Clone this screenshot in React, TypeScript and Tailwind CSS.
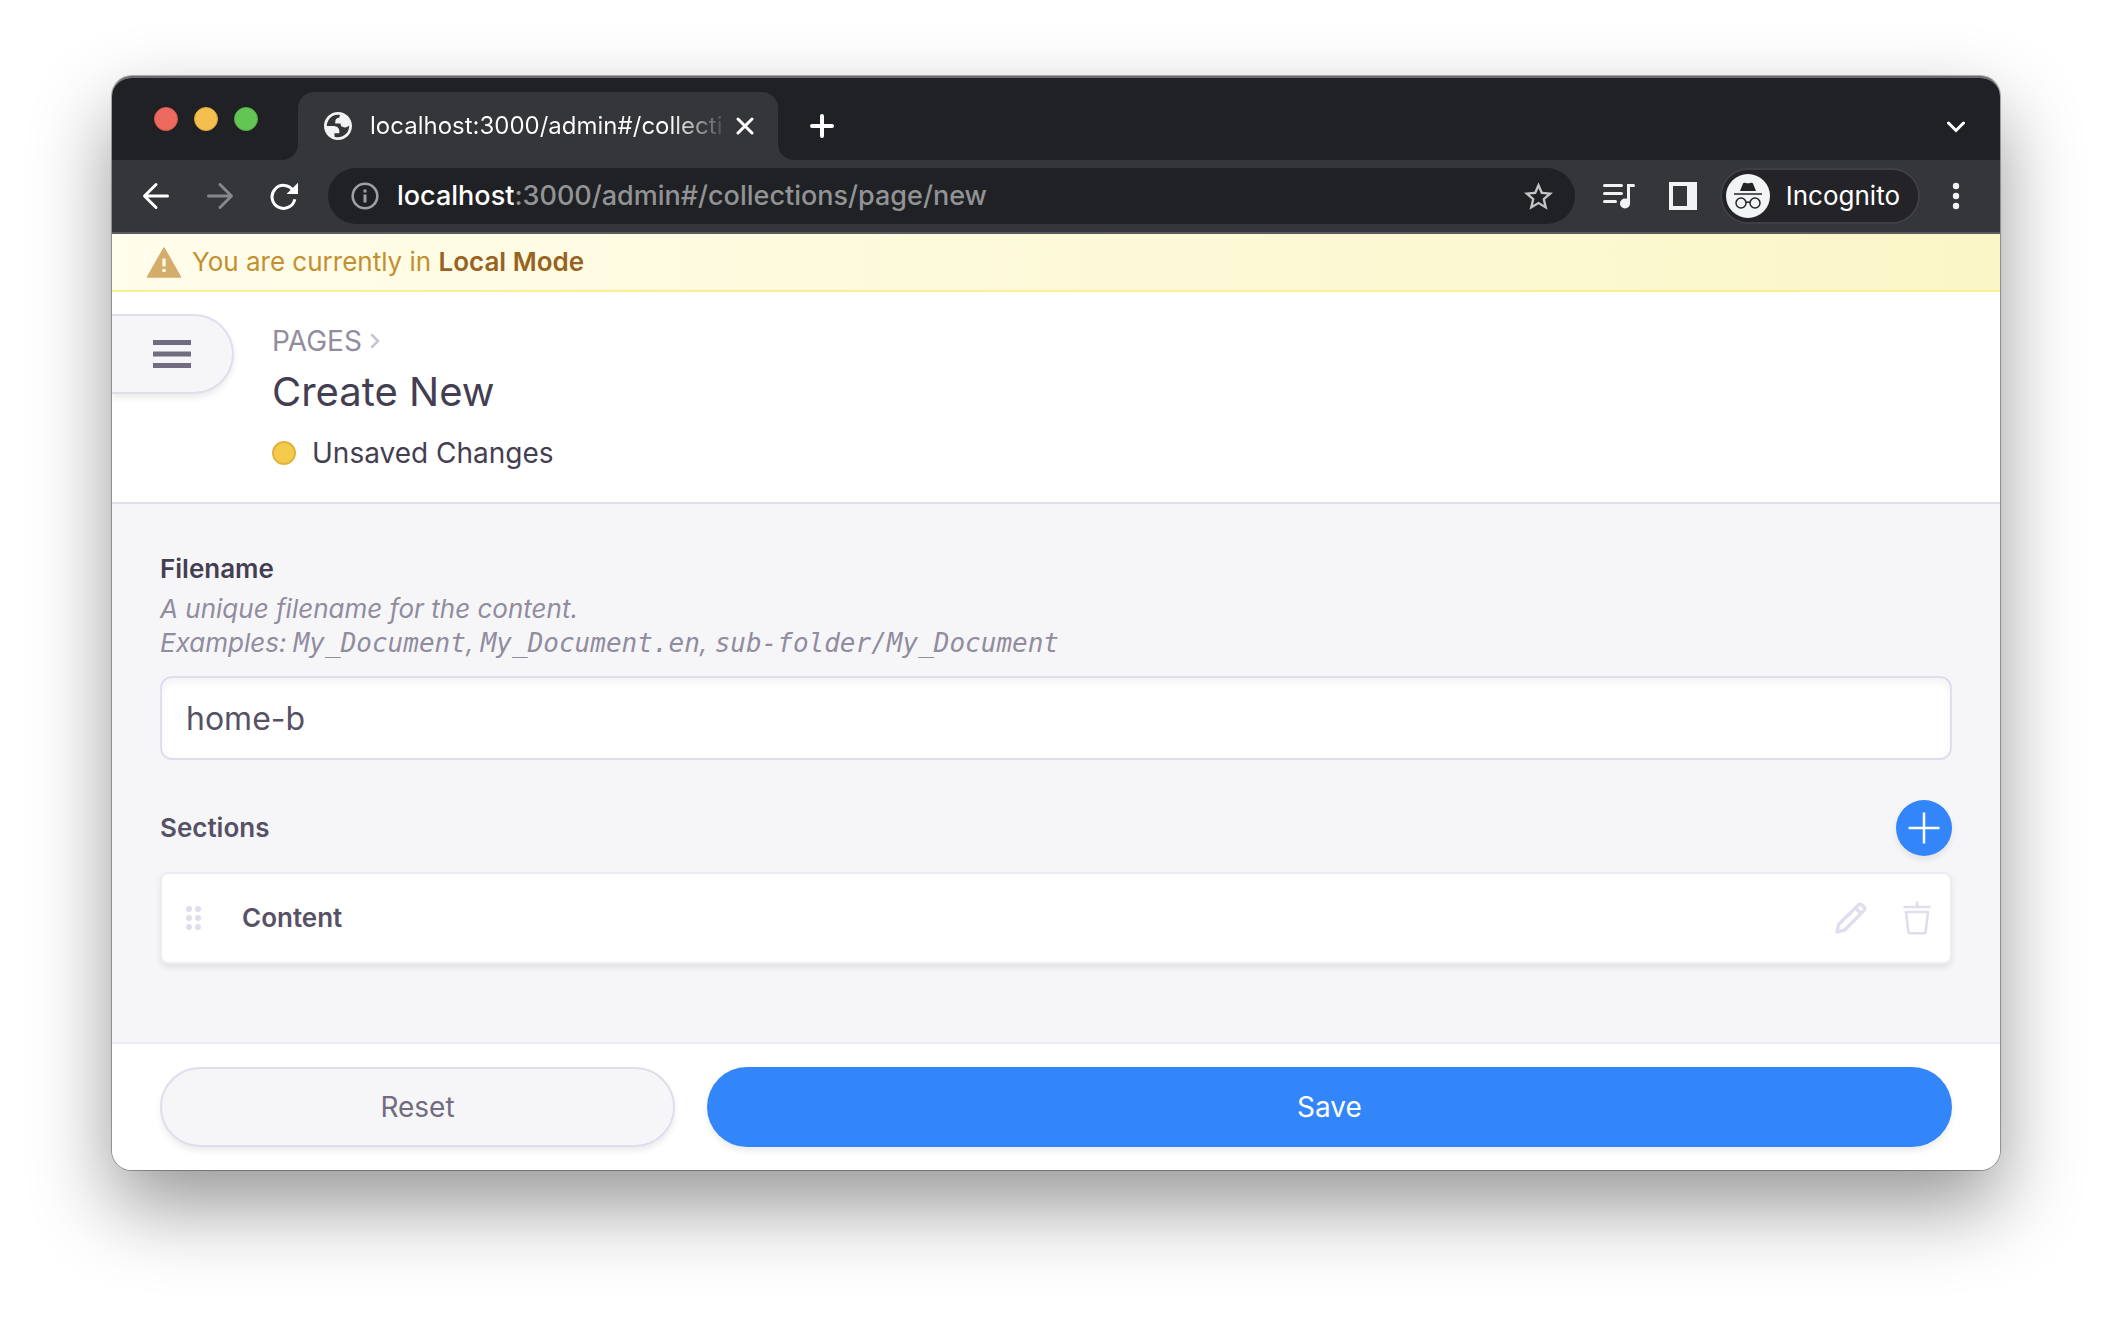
import React from "react";

const ui = "font-['Inter',sans-serif]";

function TitleBar() {
  return (
    <div className="flex h-[82px] items-end justify-between bg-[#202124] pr-[35px]">
      <div className="flex h-full">
        <div className="flex items-start gap-4 pt-[29px] pl-[42px]">
          <button aria-label="Close window" className="size-6 rounded-full border border-[#d5574c] bg-[#ed6a5e]" />
          <button aria-label="Minimise window" className="size-6 rounded-full border border-[#dba13a] bg-[#f5bf4f]" />
          <button aria-label="Zoom window" className="size-6 rounded-full border border-[#51ad40] bg-[#62c554]" />
        </div>
        <div className="flex pl-6">
          <div className="w-4 self-stretch bg-[#35363a]">
            <div className="h-full rounded-br-2xl bg-[#202124]" />
          </div>
          <div className="mt-[14px] flex w-[480px] items-center rounded-t-2xl bg-[#35363a] pr-6 pl-[26px]">
            <svg viewBox="2 2 20 20" className="size-7 shrink-0" fill="#f1f3f4" aria-hidden="true">
              <path
                fillRule="evenodd"
                d="M12 2C6.48 2 2 6.48 2 12s4.48 10 10 10 10-4.48 10-10S17.52 2 12 2zM4 12h4.4c3.407.022 4.922 1.73 4.543 5.127H9.488v2.47a8.004 8.004 0 0 0 10.498-8.083C19.327 12.504 18.332 13 17 13c-2.137 0-3.206-.916-3.206-2.75h-3.748c-.274-2.728.683-4.092 2.87-4.092 0-.975.327-1.597.811-1.97A8.004 8.004 0 0 0 4 12z"
              />
            </svg>
            <span className="ml-[18px] min-w-0 flex-1 overflow-hidden whitespace-nowrap bg-linear-to-r from-white from-85% to-white/10 to-100% bg-clip-text text-2xl text-transparent">
              localhost:3000/admin#/collecti
            </span>
            <button aria-label="Close tab" className="ml-3">
              <svg viewBox="0 0 18 18" className="size-[18px]" fill="none" stroke="#fff" strokeWidth="3" strokeLinecap="round">
                <path d="M2 2l14 14M16 2l-14 14" />
              </svg>
            </button>
          </div>
          <div className="w-4 self-stretch bg-[#35363a]">
            <div className="h-full rounded-bl-2xl bg-[#202124]" />
          </div>
        </div>
        <button aria-label="New tab" className="mt-[14px] ml-4 self-center">
          <svg viewBox="0 0 24 24" className="size-6" fill="none" stroke="#fff" strokeWidth="4" strokeLinecap="round">
            <path d="M12 2v20M2 12h20" />
          </svg>
        </button>
      </div>
      <button aria-label="Search tabs" className="mb-[27px]">
        <svg viewBox="0 0 18 12" className="h-3 w-[18px]" fill="none" stroke="#fff" strokeWidth="3" strokeLinecap="round">
          <path d="M1.500 2l7.500 7.500L16.500 2" />
        </svg>
      </button>
    </div>
  );
}

function Toolbar() {
  return (
    <div className="flex h-[74px] items-center border-b-2 border-[#5b5c60] bg-[#35363a] pr-[41px] pl-[30px]">
      <button aria-label="Back">
        <svg viewBox="0 0 28 28" className="size-7" fill="none" stroke="#fff" strokeWidth="3" strokeLinecap="round" strokeLinejoin="round">
          <path d="M25.500 14H3M14 2.500L2.500 14L14 25.500" />
        </svg>
      </button>
      <button aria-label="Forward" className="ml-9">
        <svg viewBox="0 0 28 28" className="size-7" fill="none" stroke="#86878a" strokeWidth="3" strokeLinecap="round" strokeLinejoin="round">
          <path d="M2.500 14H25M14 2.500L25.500 14L14 25.500" />
        </svg>
      </button>
      <button aria-label="Reload" className="ml-9">
        <svg viewBox="0 0 28 28" className="size-7" fill="none">
          <path d="M23.200 8.600A11.500 11.500 0 1 0 24.800 17.200" stroke="#fff" strokeWidth="3" />
          <path d="M28 0.800V12H16.500z" fill="#fff" />
        </svg>
      </button>
      <div className="ml-[30px] flex h-14 min-w-0 flex-1 items-center rounded-full bg-[#202124] pr-[22px] pl-[23px]">
        <svg viewBox="0 0 28 28" className="size-7 shrink-0" fill="none" aria-hidden="true">
          <circle cx="14" cy="14" r="12.300" stroke="#9aa0a6" strokeWidth="2.600" />
          <path d="M14 7.500v3M14 12.500v8" stroke="#9aa0a6" strokeWidth="3" />
        </svg>
        <div className="ml-[18px] flex-1 text-[27px] leading-9 font-medium text-[#919395]">
          <span className="text-white">localhost</span>:3000/admin#/collections/page/new
        </div>
        <button aria-label="Bookmark this page">
          <svg viewBox="2 2 20 19" className="h-7 w-[29px]" fill="#c3c4c6">
            <path d="M22 9.240l-7.190-.620L12 2 9.190 8.630 2 9.240l5.460 4.730L5.820 21 12 17.270 18.180 21l-1.630-7.030L22 9.240zM12 15.400l-3.760 2.270 1-4.280-3.320-2.880 4.380-.380L12 6.100l1.710 4.040 4.380.380-3.320 2.880 1 4.280L12 15.400z" />
          </svg>
        </button>
      </div>
      <button aria-label="Media controls" className="ml-7">
        <svg viewBox="0 0 32 26" className="h-[26px] w-8" fill="none" stroke="#f1f3f4" strokeWidth="3" strokeLinecap="round">
          <path d="M1.500 2.500H18.500M1.500 10.500H18.500M1.500 18.500H12.500M25.500 20V2.500H30.500" />
          <circle cx="22" cy="20.500" r="5" fill="#f1f3f4" stroke="none" />
        </svg>
      </button>
      <button aria-label="Side panel" className="ml-[34px]">
        <svg viewBox="0 0 28 28" className="size-7" fill="#f1f3f4">
          <path fillRule="evenodd" d="M0 0h28v28H0zM4 4v20h14V4z" />
        </svg>
      </button>
      <button className="ml-[23px] flex h-14 items-center gap-4 rounded-full border-2 border-[#3f3f45] bg-[#242328] pr-[18px] pl-1 text-[26px] leading-9 text-white">
        <svg viewBox="0 0 44 44" className="size-11" aria-hidden="true">
          <circle cx="22" cy="22" r="22" fill="#f1f3f4" />
          <path d="M14 17l3-7.500q.6-1.200 2-.7 3 1 6 0 1.400-.5 2 .7L30 17z" fill="#242328" />
          <path d="M8 20h28" stroke="#242328" strokeWidth="1.600" />
          <g fill="none" stroke="#242328" strokeWidth="1.500">
            <circle cx="15" cy="29" r="5" />
            <circle cx="29" cy="29" r="5" />
            <path d="M20 28.500q2-1.200 4 0" />
          </g>
        </svg>
        Incognito
      </button>
      <button aria-label="Browser menu" className="ml-[33px]">
        <svg viewBox="0 0 6 26" className="h-[26px] w-1.5 overflow-visible" fill="#f1f3f4">
          <circle cx="3" cy="3" r="3.200" />
          <circle cx="3" cy="13" r="3.200" />
          <circle cx="3" cy="23" r="3.200" />
        </svg>
      </button>
    </div>
  );
}

function ModeBanner() {
  return (
    <div className="flex h-[58px] items-center border-b-2 border-[#fcee91] bg-linear-to-r from-[#fffdeb] to-[#fbf6c7] pl-[34px] text-[26px] leading-9 text-[#c2902f]">
      <svg viewBox="0 0 36 32" className="mr-[10px] h-8 w-9" aria-hidden="true">
        <path d="M18 2L34.500 31H1.500z" fill="#d3ad69" stroke="#d3ad69" strokeWidth="1.500" strokeLinejoin="round" />
        <path d="M18 12.500v8M18 23v3" stroke="#fffce8" strokeWidth="3.200" />
      </svg>
      <p>
        You are currently in <strong className="font-semibold text-[#976222]">Local Mode</strong>
      </p>
    </div>
  );
}

function PageHeader() {
  return (
    <header className="flex items-start border-b-2 border-[#e1ddec] bg-white pb-[31px]">
      <button
        aria-label="Open navigation"
        className="mt-[22px] flex h-20 w-[122px] items-center rounded-r-full border-2 border-l-0 border-[#e1ddec] bg-[#f6f6f9] pl-[41px] shadow-[0_4px_6px_rgba(0,0,0,0.08)]"
      >
        <svg viewBox="0 0 38 28" className="h-7 w-[38px]" fill="#716c7f">
          <path d="M0 0h38v5H0zM0 11.500h38v5H0zM0 23h38v5H0z" />
        </svg>
      </button>
      <div className="ml-[38px] pt-[31px]">
        <nav className="flex items-center gap-2 text-[28px] leading-9">
          <a href="#pages" className="text-[#918c9e]">PAGES</a>
          <svg viewBox="0 0 10 16" className="h-4 w-[10px]" fill="none" stroke="#c8c4d1" strokeWidth="2.500" strokeLinecap="round" aria-hidden="true">
            <path d="M2 2l6 6-6 6" />
          </svg>
        </nav>
        <h1 className="mt-2 text-[40px] leading-[50px] text-[#433e52]">Create New</h1>
        <p className="mt-[18px] flex items-center gap-4 text-[28px] leading-9 text-[#433e52]">
          <span className="size-6 rounded-full border-2 border-[#e1b340] bg-[#f5cb4b]" />
          Unsaved Changes
        </p>
      </div>
    </header>
  );
}

function SectionCard({ title }: { title: string }) {
  return (
    <div className="mt-4 flex h-[92px] items-center rounded-lg border-2 border-[#edecf3] bg-white pr-[19px] pl-6 shadow-[0_4px_6px_rgba(0,0,0,0.08)]">
      <svg viewBox="0 0 16 24" className="h-6 w-4" fill="#e1ddec" aria-label="Drag to reorder">
        <path d="M0 3a3 3 0 1 0 6 0a3 3 0 1 0-6 0M9 3a3 3 0 1 0 6 0a3 3 0 1 0-6 0M0 12a3 3 0 1 0 6 0a3 3 0 1 0-6 0M9 12a3 3 0 1 0 6 0a3 3 0 1 0-6 0M0 21a3 3 0 1 0 6 0a3 3 0 1 0-6 0M9 21a3 3 0 1 0 6 0a3 3 0 1 0-6 0" />
      </svg>
      <span className="ml-10 flex-1 text-[26px] leading-9 font-semibold text-[#565165]">{title}</span>
      <button aria-label={`Edit ${title}`}>
        <svg viewBox="0 0 32 32" className="size-8" fill="none" stroke="#e1ddec" strokeWidth="3.400" strokeLinejoin="round">
          <path d="M2 30l1.500-7.500L23.200 3.300q2-2 4 0l1.500 1.500q2 2 0 4L9.500 28.200z" />
          <path d="M20.500 6l6 6" />
        </svg>
      </button>
      <button aria-label={`Delete ${title}`} className="ml-9">
        <svg viewBox="0 0 28 34" className="h-[34px] w-7" fill="none" stroke="#e1ddec" strokeWidth="2.600">
          <path d="M0.500 6h27M14 0.500V6M3 11h22l-2.300 19.500q-.2 1.800-2 1.800H7.300q-1.800 0-2-1.800z" />
        </svg>
      </button>
    </div>
  );
}

export default function App() {
  return (
    <div className={`min-h-screen bg-white px-28 pt-[76px] pb-[148px] ${ui}`}>
      <div className="overflow-hidden rounded-[20px] border-t-2 border-[#6c6d6f] bg-white shadow-[0_0_0_1px_rgba(0,0,0,0.3),0_36px_80px_rgba(0,0,0,0.41)]">
        <TitleBar />
        <Toolbar />
        <ModeBanner />
        <PageHeader />
        <form onSubmit={(e) => e.preventDefault()}>
          <div className="bg-[#f6f6f9] px-12 pt-12 pb-[78px]">
            <label htmlFor="filename" className="block text-[26px] leading-[34px] font-semibold text-[#433e52]">
              Filename
            </label>
            <p id="filename-help" className="mt-1.5 text-[26px] leading-[34px] text-[#918c9e] italic">
              A unique filename for the content.
              <br />
              Examples: <code className="font-['DejaVu_Sans_Mono',monospace]">My_Document</code>,{" "}
              <code className="font-['DejaVu_Sans_Mono',monospace]">My_Document.en</code>,{" "}
              <code className="font-['DejaVu_Sans_Mono',monospace]">sub-folder/My_Document</code>
            </p>
            <input
              id="filename"
              type="text"
              aria-describedby="filename-help"
              defaultValue="home-b"
              className="mt-4 block h-[84px] w-full rounded-xl border-2 border-[#e1ddec] bg-white px-6 text-[32px] text-[#565165] shadow-[inset_0_4px_8px_rgba(0,0,0,0.05)]"
            />
            <div className="mt-10 flex items-center justify-between">
              <h2 className="text-[26px] leading-9 font-semibold text-[#565165]">Sections</h2>
              <button type="button" aria-label="Add section" className="flex size-14 items-center justify-center rounded-full bg-[#3385fa] shadow-[0_4px_6px_rgba(0,0,0,0.08)]">
                <svg viewBox="0 0 32 32" className="size-8" fill="none" stroke="#fff" strokeWidth="2.500">
                  <path d="M16 0.500v31M0.500 16h31" />
                </svg>
              </button>
            </div>
            <SectionCard title="Content" />
          </div>
          <div className="grid grid-cols-[515fr_1245fr] gap-8 border-t-2 border-[#edecf3] bg-white px-12 py-[23px] text-[28px]">
            <button type="reset" className="h-20 rounded-full border-2 border-[#e1ddec] bg-[#f6f6f9] text-[#716c7f] shadow-[0_4px_6px_rgba(0,0,0,0.08)]">
              Reset
            </button>
            <button type="submit" className="h-20 rounded-full bg-[#3385fa] text-white shadow-[0_4px_6px_rgba(0,0,0,0.08)]">
              Save
            </button>
          </div>
        </form>
      </div>
    </div>
  );
}
